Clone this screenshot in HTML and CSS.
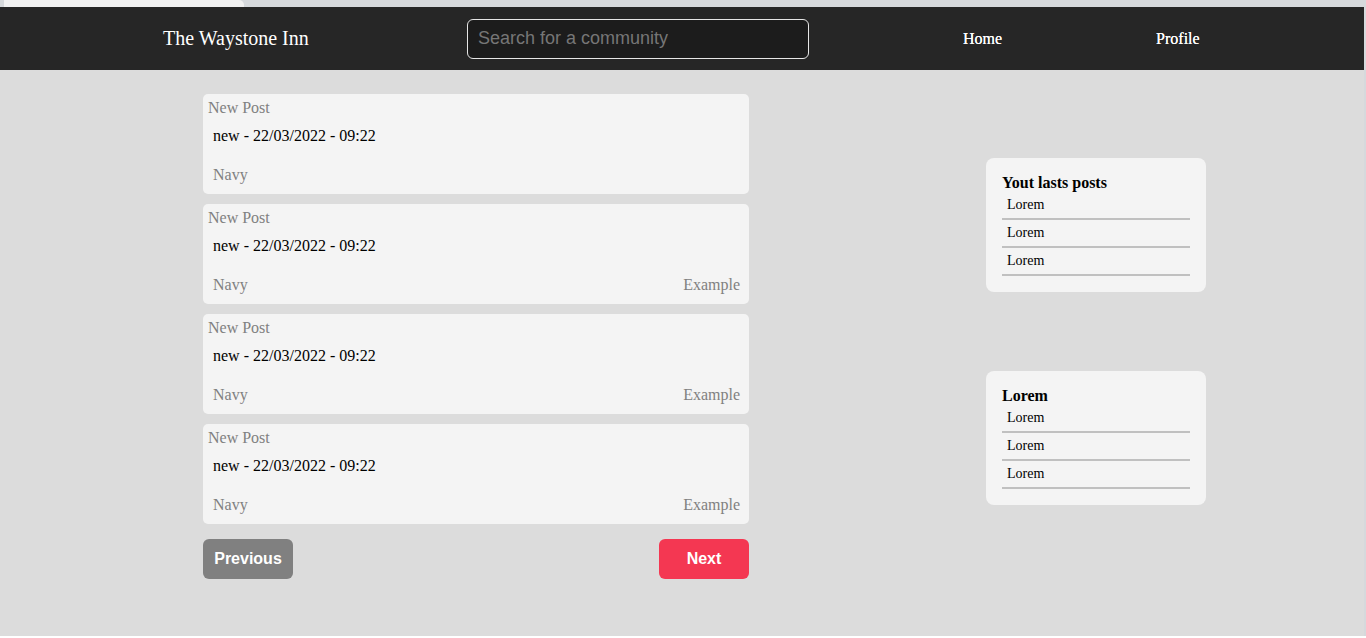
FILE: index.html
```html
<!DOCTYPE html>
<html lang="en">
<head>
<meta charset="utf-8">
<title>The Waystone Inn</title>
<link rel="stylesheet" href="styles.css">
</head>
<body>
<div class="chrome"><div class="tab"></div></div>
<header class="navbar">
  <div class="brand">The Waystone Inn</div>
  <input class="search" type="text" placeholder="Search for a community">
  <a class="nav-link home" href="#">Home</a>
  <a class="nav-link profile" href="#">Profile</a>
</header>
<main class="main">
  <section class="feed">
    <article class="post">
      <div class="post-title">New Post</div>
      <div class="post-meta">new - 22/03/2022 - 09:22</div>
      <div class="post-footer"><span>Navy</span><span></span></div>
    </article>
    <article class="post">
      <div class="post-title">New Post</div>
      <div class="post-meta">new - 22/03/2022 - 09:22</div>
      <div class="post-footer"><span>Navy</span><span>Example</span></div>
    </article>
    <article class="post">
      <div class="post-title">New Post</div>
      <div class="post-meta">new - 22/03/2022 - 09:22</div>
      <div class="post-footer"><span>Navy</span><span>Example</span></div>
    </article>
    <article class="post">
      <div class="post-title">New Post</div>
      <div class="post-meta">new - 22/03/2022 - 09:22</div>
      <div class="post-footer"><span>Navy</span><span>Example</span></div>
    </article>
    <div class="pager">
      <button class="btn btn-prev">Previous</button>
      <button class="btn btn-next">Next</button>
    </div>
  </section>
  <aside class="sidebar">
    <div class="side-card">
      <div class="side-title">Yout lasts posts</div>
      <ul class="side-list">
        <li>Lorem</li>
        <li>Lorem</li>
        <li>Lorem</li>
      </ul>
    </div>
    <div class="side-card">
      <div class="side-title">Lorem</div>
      <ul class="side-list">
        <li>Lorem</li>
        <li>Lorem</li>
        <li>Lorem</li>
      </ul>
    </div>
  </aside>
</main>
<div class="bottom-line"></div>
</body>
</html>
```
FILE: styles.css
```css
* { box-sizing: border-box; }
html, body { margin: 0; padding: 0; }
body {
  width: 1366px;
  height: 638px;
  overflow: hidden;
  background: #d6d9dc;
  font-family: "Liberation Serif", "Times New Roman", serif;
}
.chrome {
  height: 7px;
  background: #d6d9dc;
  padding-left: 4px;
}
.tab {
  width: 240px;
  height: 7px;
  background: #f1f1f1;
  border-radius: 0 5px 0 0;
}
.navbar {
  height: 63px;
  width: 1364px;
  background: #262626;
  display: flex;
  align-items: center;
  padding-left: 163px;
}
.brand {
  color: #ffffff;
  font-size: 20px;
  width: 145px;
  white-space: nowrap;
}
.search {
  margin-left: 159px;
  width: 342px;
  height: 40px;
  background: #1c1c1c;
  border: 1px solid #e6e6e6;
  border-radius: 6px;
  padding: 0 10px;
  font-family: "Liberation Sans", Arial, sans-serif;
  font-size: 18px;
  color: #ddd;
  outline: none;
}
.search::placeholder { color: #767676; }
.nav-link {
  color: #ffffff;
  text-decoration: none;
  font-size: 16px;
  text-shadow: 0 0 0.4px #fff;
}
.home { margin-left: 154px; }
.profile { margin-left: 154px; }
.main {
  height: 566px;
  width: 1364px;
  background: #dcdcdc;
  display: flex;
  align-items: flex-start;
  padding-left: 203px;
  padding-top: 24px;
}
.feed {
  width: 546px;
  display: flex;
  flex-direction: column;
  gap: 10px;
}
.post {
  height: 100px;
  background: #f4f4f4;
  border-radius: 5px;
  padding: 5px 9px 9px 5px;
  font-size: 16px;
}
.post-title {
  color: #808080;
  line-height: 18px;
}
.post-meta {
  color: #000;
  line-height: 20px;
  margin-top: 9px;
  padding-left: 5px;
}
.post-footer {
  display: flex;
  justify-content: space-between;
  color: #808080;
  line-height: 20px;
  margin-top: 19px;
  padding-left: 5px;
}
.pager {
  display: flex;
  justify-content: space-between;
  margin-top: 5px;
}
.btn {
  width: 90px;
  height: 40px;
  border: none;
  border-radius: 6px;
  color: #fff;
  font-family: "Liberation Sans", Arial, sans-serif;
  font-weight: bold;
  font-size: 16px;
  padding: 0;
}
.btn-prev { background: #808080; }
.btn-next { background: #f43752; }
.sidebar {
  margin-left: 237px;
  margin-top: 64px;
  width: 220px;
  display: flex;
  flex-direction: column;
  gap: 79px;
}
.side-card {
  background: #f4f4f4;
  border-radius: 8px;
  padding: 16px;
}
.side-title {
  font-weight: bold;
  font-size: 16px;
  line-height: 18px;
  color: #000;
}
.side-list {
  list-style: none;
  margin: 0;
  padding: 0;
}
.side-list li {
  height: 28px;
  line-height: 26px;
  font-size: 14px;
  padding-left: 5px;
  border-bottom: 2px solid #c0c0c0;
  color: #000;
}
.bottom-line {
  height: 2px;
  width: 1366px;
  background: #ffffff;
}
```
